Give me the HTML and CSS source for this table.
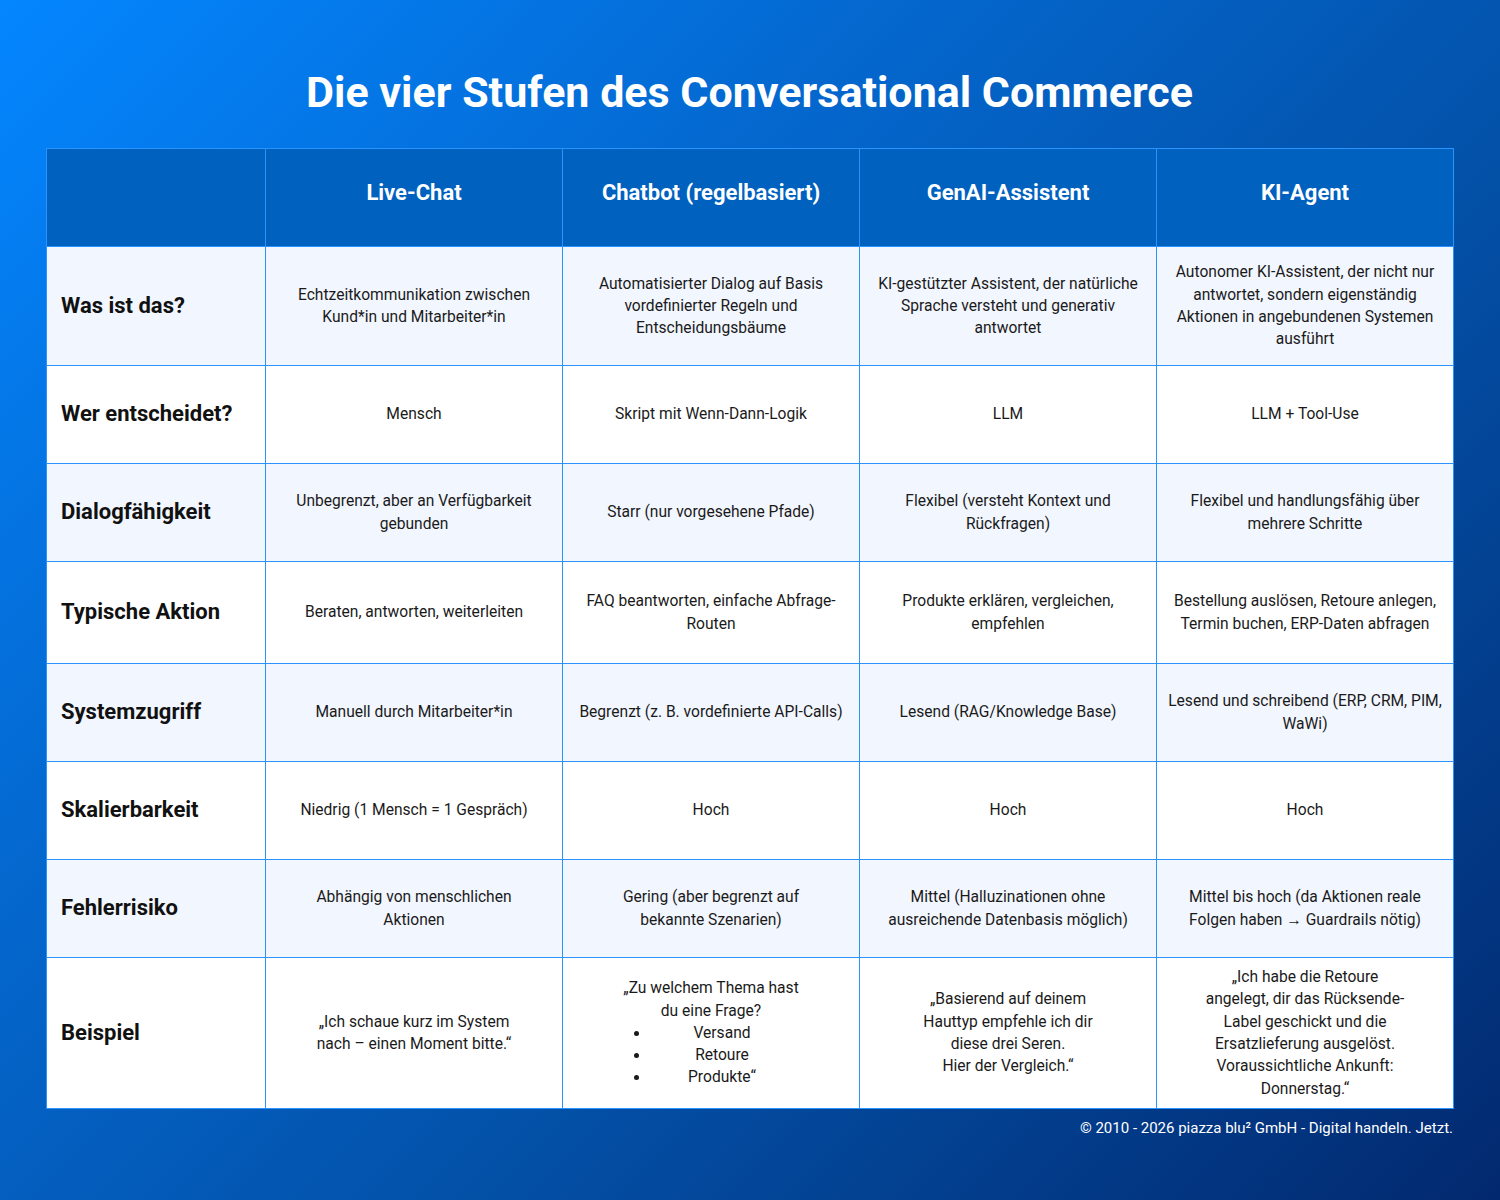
FILE: index.html
```html
<!DOCTYPE html>
<html lang="de">
<head>
<meta charset="utf-8">
<title>Die vier Stufen des Conversational Commerce</title>
<link rel="stylesheet" href="styles.css">
</head>
<body>
<div class="page">
  <h1 class="title">Die vier Stufen des Conversational Commerce</h1>
  <table class="grid">
    <colgroup>
      <col class="c-label">
      <col class="c-val"><col class="c-val"><col class="c-val"><col class="c-val">
    </colgroup>
    <thead>
      <tr class="r-head">
        <th></th>
        <th>Live-Chat</th>
        <th>Chatbot (regelbasiert)</th>
        <th>GenAI-Assistent</th>
        <th>KI-Agent</th>
      </tr>
    </thead>
    <tbody>
      <tr class="r-alt r-1">
        <td class="lbl">Was ist das?</td>
        <td>Echtzeitkommunikation zwischen<br>Kund*in und Mitarbeiter*in</td>
        <td>Automatisierter Dialog auf Basis<br>vordefinierter Regeln und<br>Entscheidungsbäume</td>
        <td>KI-gestützter Assistent, der natürliche<br>Sprache versteht und generativ<br>antwortet</td>
        <td>Autonomer KI-Assistent, der nicht nur<br>antwortet, sondern eigenständig<br>Aktionen in angebundenen Systemen<br>ausführt</td>
      </tr>
      <tr class="r-std">
        <td class="lbl">Wer entscheidet?</td>
        <td>Mensch</td>
        <td>Skript mit Wenn-Dann-Logik</td>
        <td>LLM</td>
        <td>LLM + Tool-Use</td>
      </tr>
      <tr class="r-alt r-std">
        <td class="lbl">Dialogfähigkeit</td>
        <td>Unbegrenzt, aber an Verfügbarkeit<br>gebunden</td>
        <td>Starr (nur vorgesehene Pfade)</td>
        <td>Flexibel (versteht Kontext und<br>Rückfragen)</td>
        <td>Flexibel und handlungsfähig über<br>mehrere Schritte</td>
      </tr>
      <tr class="r-4">
        <td class="lbl">Typische Aktion</td>
        <td>Beraten, antworten, weiterleiten</td>
        <td>FAQ beantworten, einfache Abfrage-<br>Routen</td>
        <td>Produkte erklären, vergleichen,<br>empfehlen</td>
        <td>Bestellung auslösen, Retoure anlegen,<br>Termin buchen, ERP-Daten abfragen</td>
      </tr>
      <tr class="r-alt r-std">
        <td class="lbl">Systemzugriff</td>
        <td>Manuell durch Mitarbeiter*in</td>
        <td>Begrenzt (z. B. vordefinierte API-Calls)</td>
        <td>Lesend (RAG/Knowledge Base)</td>
        <td>Lesend und schreibend (ERP, CRM, PIM,<br>WaWi)</td>
      </tr>
      <tr class="r-std">
        <td class="lbl">Skalierbarkeit</td>
        <td>Niedrig (1 Mensch = 1 Gespräch)</td>
        <td>Hoch</td>
        <td>Hoch</td>
        <td>Hoch</td>
      </tr>
      <tr class="r-alt r-std">
        <td class="lbl">Fehlerrisiko</td>
        <td>Abhängig von menschlichen<br>Aktionen</td>
        <td>Gering (aber begrenzt auf<br>bekannte Szenarien)</td>
        <td>Mittel (Halluzinationen ohne<br>ausreichende Datenbasis möglich)</td>
        <td>Mittel bis hoch (da Aktionen reale<br>Folgen haben → Guardrails nötig)</td>
      </tr>
      <tr class="r-last">
        <td class="lbl">Beispiel</td>
        <td>„Ich schaue kurz im System<br>nach – einen Moment bitte.“</td>
        <td>
          <div class="quote">„Zu welchem Thema hast<br>du eine Frage?</div>
          <ul class="opts">
            <li>Versand</li>
            <li>Retoure</li>
            <li>Produkte“</li>
          </ul>
        </td>
        <td>„Basierend auf deinem<br>Hauttyp empfehle ich dir<br>diese drei Seren.<br>Hier der Vergleich.“</td>
        <td>„Ich habe die Retoure<br>angelegt, dir das Rücksende-<br>Label geschickt und die<br>Ersatzlieferung ausgelöst.<br>Voraussichtliche Ankunft:<br>Donnerstag.“</td>
      </tr>
    </tbody>
  </table>
  <p class="footer">© 2010 - 2026 piazza blu² GmbH - Digital handeln. Jetzt.</p>
</div>
</body>
</html>
```

FILE: styles.css
```css
html, body {
  margin: 0;
  padding: 0;
}
body {
  width: 1500px;
  height: 1200px;
  background: linear-gradient(135deg, #0486ff 0%, #0466cc 35%, #0352aa 60%, #02296f 100%);
  font-family: Roboto, "Liberation Sans", sans-serif;
  color: #1a1a1a;
  overflow: hidden;
}
.page {
  padding: 64px 47px 0 46px;
}
.title {
  margin: 0;
  text-align: center;
  color: #ffffff;
  font-size: 43px;
  line-height: 56px;
  font-weight: 700;
}
.grid {
  margin-top: 28px;
  width: 1407px;
  border-collapse: collapse;
  table-layout: fixed;
  border: 1px solid #2a93ff;
}
.c-label { width: 219px; }
.c-val { width: 297px; }
.grid th, .grid td {
  border: 1px solid #2a93ff;
  padding: 0 6px;
  text-align: center;
  vertical-align: middle;
  font-size: 15.6px;
  line-height: 22.3px;
  white-space: nowrap;
}
.r-head th {
  height: 89px;
  padding-bottom: 8px;
  background: #0061bf;
  color: #ffffff;
  font-size: 22px;
  font-weight: 700;
}
.grid td { background: #ffffff; }
.r-alt td { background: #f2f6ff; }
.r-1 td { height: 118px; }
.r-std td { height: 97px; }
.r-4 td { height: 101px; }
.r-last td { height: 150px; }
.grid td.lbl {
  padding-left: 14px;
  text-align: left;
  font-size: 22px;
  font-weight: 700;
  color: #111111;
}
.quote { margin: 0; }
.opts {
  margin: 0 0 0 81px;
  padding: 0;
  width: 144px;
  text-align: center;
}
.opts li { padding: 0; }
.footer {
  margin: 9px 0 0;
  text-align: right;
  color: #ffffff;
  font-size: 15px;
  line-height: 20px;
}
```
